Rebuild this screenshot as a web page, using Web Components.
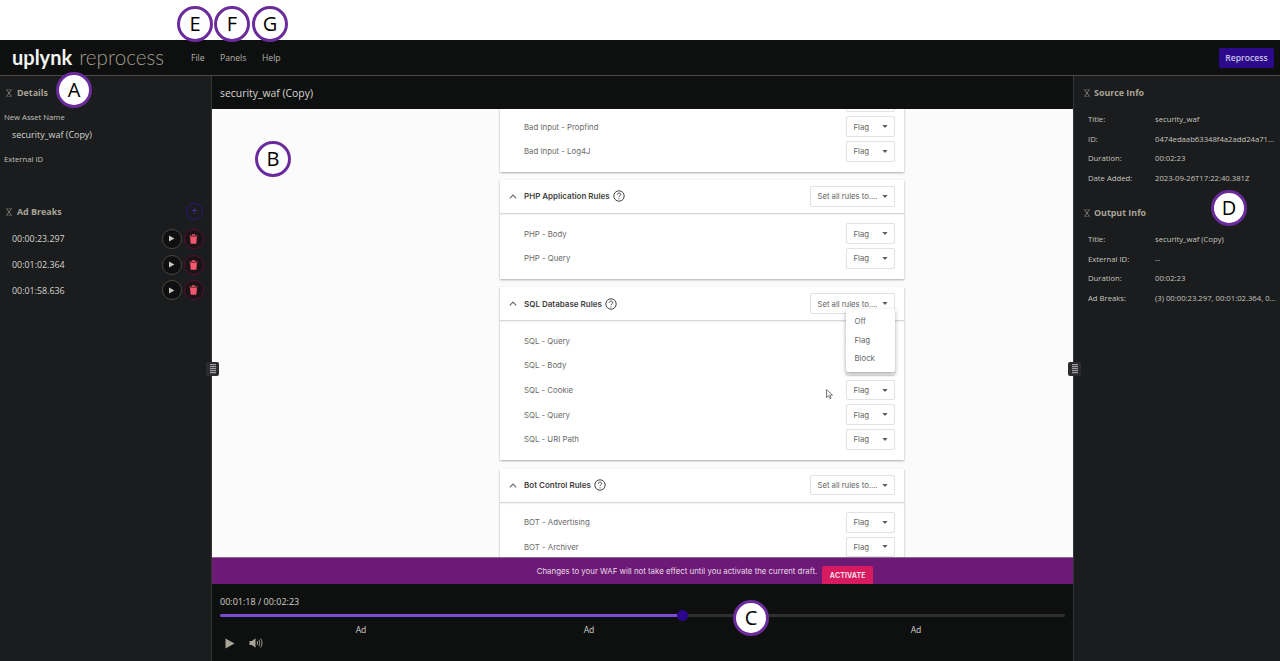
<!DOCTYPE html>
<html>
<head>
<meta charset="utf-8">
<title>uplynk reprocess</title>
<style>
    html, body { margin: 0; height: 661px; overflow: hidden; background: #fff; }
    body { font-family: "Open Sans", "Liberation Sans", sans-serif; }
</style>
</head>
<body>
<reprocess-app></reprocess-app>

<script>
const ICONS = {
    collapse: '<svg width="8" height="8" viewBox="0 0 8 8" fill="none" stroke="#8a8880" stroke-width=".85"><path d="M1.6.7 6.4 7.3M6.4.7 1.6 7.3"/><path d="M1.2.5h5.6M1.2 7.5h5.6" stroke-opacity=".45"/></svg>',
    play: '<svg width="7" height="7" viewBox="0 0 7 7"><path d="M1 .6 6.4 3.5 1 6.4z" fill="#c9c6bc"/></svg>',
    trash: '<svg width="9" height="10" viewBox="0 0 9 10"><path d="M.5 1.5h8v1H.5zM3 .3h3v1H3zM1.1 3h6.8l-.5 6.3c0 .3-.3.5-.6.5H2.2c-.3 0-.6-.2-.6-.5z" fill="#f5566f"/></svg>',
    caret: '<svg width="6" height="3" viewBox="0 0 6 3"><path d="M.4 0h5.2L3 3z" fill="#5c5c5c"/></svg>',
    chevron: '<svg width="8" height="5" viewBox="0 0 8 5" fill="none" stroke="#666" stroke-width="1.1"><path d="M.8 4.3 4 1.1l3.2 3.2"/></svg>',
    help: '<svg width="12" height="12" viewBox="0 0 12 12" fill="none" stroke="#444" stroke-width="1"><circle cx="6" cy="6" r="5.2"/><path d="M4.3 4.7c0-1 .8-1.6 1.7-1.6s1.7.6 1.7 1.5c0 1.2-1.7 1.3-1.7 2.6" /><path d="M6 8.3v1" /></svg>'
};

class ReprocessApp extends HTMLElement {
    constructor() {
        super();
        this.attachShadow({ mode: 'open' });
    }

    connectedCallback() {
        this.shadowRoot.innerHTML = `
            <style>
                :host { display: flex; flex-direction: column; height: 661px; position: relative; overflow: hidden; }
                .strip { height: 40px; flex: none; background: #fff; }
                .main { flex: 1; display: flex; min-height: 0; }
                .centre { flex: 1; min-width: 0; display: flex; flex-direction: column; }
                side-panel:first-child { width: 212px; }
                side-panel:last-child { width: 207px; }
            </style>
            <div class="strip"></div>
            <top-bar></top-bar>
            <div class="main">
                <side-panel>
                    <details-pane></details-pane>
                    <ad-breaks></ad-breaks>
                </side-panel>
                <div class="centre">
                    <title-bar>security_waf (Copy)</title-bar>
                    <waf-view></waf-view>
                    <draft-banner></draft-banner>
                    <player-bar></player-bar>
                </div>
                <side-panel edge>
                    <info-pane heading="Source Info" rows='[["Title:","security_waf"],["ID:","0474edaab63348f4a2add24a71..."],["Duration:","00:02:23"],["Date Added:","2023-09-26T17:22:40.381Z"]]'></info-pane>
                    <info-pane heading="Output Info" rows='[["Title:","security_waf (Copy)"],["External ID:","--"],["Duration:","00:02:23"],["Ad Breaks:","(3) 00:00:23.297, 00:01:02.364, 0..."]]'></info-pane>
                </side-panel>
            </div>
            <drag-grip style="left:206px"></drag-grip>
            <drag-grip style="left:1068px"></drag-grip>
            <call-out style="left:177px;top:6px">E</call-out>
            <call-out style="left:214px;top:6px">F</call-out>
            <call-out style="left:252px;top:6px">G</call-out>
            <call-out style="left:56px;top:72px">A</call-out>
            <call-out style="left:255px;top:141px">B</call-out>
            <call-out style="left:733px;top:600px">C</call-out>
            <call-out style="left:1211px;top:190px">D</call-out>
        `;
    }
}
customElements.define('reprocess-app', ReprocessApp);

class TopBar extends HTMLElement {
    constructor() {
        super();
        this.attachShadow({ mode: 'open' });
    }

    connectedCallback() {
        this.shadowRoot.innerHTML = `
            <style>
                :host { display: flex; align-items: center; flex: none; height: 35px; background: #0e1010; border-bottom: 1px solid #4b4a47; padding: 0 6px 0 12px; color: #b5b2a8; font-size: 8.6px; }
                .logo { width: 179px; display: flex; align-items: baseline; white-space: nowrap; line-height: 35px; }
                .brand { font: 700 20px/35px Lato, sans-serif; color: #f4f4f2; position: relative; }
                .brand svg { position: absolute; left: 14.5px; top: 14px; }
                .product { font: 300 20.6px/35px Lato, sans-serif; color: #a39d8c; margin-left: 7px; }
                nav { flex: 1; display: flex; }
                nav span:nth-child(1) { width: 29px; }
                nav span:nth-child(2) { width: 42px; }
                button { font: 600 8.6px "Open Sans", sans-serif; width: 55px; height: 20px; border: 0; border-radius: 2px; background: #2d0a8c; color: #c9c3e6; padding: 0; }
            </style>
            <div class="logo"><span class="brand">uplynk<svg width="5" height="6" viewBox="0 0 5 6"><path d="M.5.5 4.5 3 .5 5.5z" fill="#0e1010"/></svg></span><span class="product">reprocess</span></div>
            <nav><span>File</span><span>Panels</span><span>Help</span></nav>
            <button>Reprocess</button>
        `;
    }
}
customElements.define('top-bar', TopBar);

class SidePanel extends HTMLElement {
    constructor() {
        super();
        this.attachShadow({ mode: 'open' }).innerHTML = `
            <style>
                :host { display: block; flex: none; background: #1a1c1e; color: #d0cec6; font-size: 8.6px; box-sizing: border-box; border-right: 1px solid #34363a; }
                :host([edge]) { border-right: 0; border-left: 1px solid #34363a; padding-left: 8px; }
            </style>
            <slot></slot>
        `;
    }
}
customElements.define('side-panel', SidePanel);

class PanelHeading extends HTMLElement {
    constructor() {
        super();
        this.attachShadow({ mode: 'open' }).innerHTML = `
            <style>
                :host { display: flex; align-items: center; gap: 4px; font-weight: 700; font-size: 8.9px; color: #a9a598; height: 33px; padding-left: 5px; }
                svg { flex: none; }
            </style>
            ${ICONS.collapse}<slot></slot>
        `;
    }
}
customElements.define('panel-heading', PanelHeading);

class DetailsPane extends HTMLElement {
    constructor() {
        super();
        this.attachShadow({ mode: 'open' }).innerHTML = `
            <style>
                :host { display: block; height: 119px; }
                .label { padding-left: 4px; font-size: 7.7px; line-height: 12px; margin-top: 2px; color: #c4c2ba; }
                .value { padding-left: 12px; font-size: 8.95px; line-height: 14px; margin: 5px 0 11px; color: #d8d6cf; }
            </style>
            <panel-heading>Details</panel-heading>
            <div class="label">New Asset Name</div>
            <div class="value">security_waf (Copy)</div>
            <div class="label">External ID</div>
        `;
    }
}
customElements.define('details-pane', DetailsPane);

class AdBreaks extends HTMLElement {
    constructor() {
        super();
        this.attachShadow({ mode: 'open' }).innerHTML = `
            <style>
                :host { display: block; }
                .top { display: flex; justify-content: space-between; align-items: center; padding-right: 8px; height: 33px; }
                .add { width: 15px; height: 15px; border: 1px solid #2c1587; border-radius: 50%; color: #43309f; font-size: 12px; line-height: 14px; text-align: center; }
                .list { margin-top: -2px; }
            </style>
            <div class="top"><panel-heading>Ad Breaks</panel-heading><div class="add">+</div></div>
            <div class="list">
                <ad-break>00:00:23.297</ad-break>
                <ad-break>00:01:02.364</ad-break>
                <ad-break>00:01:58.636</ad-break>
            </div>
        `;
    }
}
customElements.define('ad-breaks', AdBreaks);

class AdBreak extends HTMLElement {
    constructor() {
        super();
        this.attachShadow({ mode: 'open' }).innerHTML = `
            <style>
                :host { display: flex; align-items: center; height: 25.7px; padding: 0 7.5px 0 12px; font-size: 8.9px; color: #d8d6cf; }
                .time { flex: 1; }
                .btn { box-sizing: border-box; width: 20px; height: 20px; border-radius: 50%; display: flex; align-items: center; justify-content: center; margin-left: 2px; }
                .play { border: 1px solid #4a4840; background: #0e0f10; }
                .del { border: 1px solid #5a0f2c; background: #1a1416; }
            </style>
            <span class="time"><slot></slot></span>
            <span class="btn play">${ICONS.play}</span>
            <span class="btn del">${ICONS.trash}</span>
        `;
    }
}
customElements.define('ad-break', AdBreak);

class InfoPane extends HTMLElement {
    constructor() {
        super();
        this.attachShadow({ mode: 'open' });
    }

    connectedCallback() {
        const rows = JSON.parse(this.getAttribute('rows') || '[]');
        const rowsHtml = rows.map(r => `<div class="row"><span class="k">${r[0]}</span><span class="v">${r[1]}</span></div>`).join('');
        this.shadowRoot.innerHTML = `
            <style>
                :host { display: block; height: 120px; }
                panel-heading { margin-left: -4px; gap: 3px; }
                .rows { margin-top: .5px; }
                .row { display: flex; height: 19.6px; align-items: center; padding-left: 6px; font-size: 7.7px; white-space: nowrap; color: #c8c6be; }
                .k { width: 67px; flex: none; }
            </style>
            <panel-heading>${this.getAttribute('heading')}</panel-heading>
            <div class="rows">${rowsHtml}</div>
        `;
    }
}
customElements.define('info-pane', InfoPane);

class TitleBar extends HTMLElement {
    constructor() {
        super();
        this.attachShadow({ mode: 'open' }).innerHTML = `
            <style>
                :host { display: flex; flex: none; align-items: center; height: 33px; padding-left: 8px; background: #0e1010; color: #d8d6cf; font-size: 10.4px; }
            </style>
            <slot></slot>
        `;
    }
}
customElements.define('title-bar', TitleBar);

class WafView extends HTMLElement {
    constructor() {
        super();
        this.attachShadow({ mode: 'open' }).innerHTML = `
            <style>
                :host { display: block; flex: 1; min-height: 0; overflow: hidden; background: #fbfbfb; font-family: Inter, sans-serif; position: relative; }
                .scrolled { display: flex; flex-direction: column; gap: 8.4px; margin: -26.7px 0 0 288px; }
                waf-card:last-child { margin-top: .6px; }
            </style>
            <div class="scrolled">
                <waf-card rules="*|Bad Input - Propfind|Bad Input - Log4J"></waf-card>
                <waf-card heading="PHP Application Rules" rules="PHP - Body|PHP - Query"></waf-card>
                <waf-card heading="SQL Database Rules" rules="*SQL - Query|*SQL - Body|SQL - Cookie|SQL - Query|SQL - URI Path" open></waf-card>
                <waf-card heading="Bot Control Rules" rules="BOT - Advertising|BOT - Archiver"></waf-card>
            </div>
            <mouse-cursor></mouse-cursor>
        `;
    }
}
customElements.define('waf-view', WafView);

class WafSelect extends HTMLElement {
    constructor() {
        super();
        this.attachShadow({ mode: 'open' }).innerHTML = `
            <style>
                :host { display: flex; align-items: center; justify-content: space-between; box-sizing: border-box; height: 20.6px; padding: 0 6.5px; background: #fff; border: 1px solid #e2e2e2; border-radius: 2px; box-shadow: 0 0 1px #0001; color: #666; font-size: 7.8px; white-space: nowrap; }
            </style>
            <span><slot></slot></span>${ICONS.caret}
        `;
    }
}
customElements.define('waf-select', WafSelect);

class WafCard extends HTMLElement {
    constructor() {
        super();
        this.attachShadow({ mode: 'open' });
    }

    connectedCallback() {
        // a leading * marks a row whose select sits under the menu or the scroll edge
        const rules = (this.getAttribute('rules') || '').split('|');
        const rulesHtml = rules.map(r => {
            const covered = r.startsWith('*');
            return `<div class="rule"><span>${covered ? r.slice(1) : r}</span><waf-select class="flag">${covered ? '' : 'Flag'}</waf-select></div>`;
        }).join('');
        const heading = this.getAttribute('heading');
        const headHtml = heading ? `
            <div class="head">
                <span class="chev">${ICONS.chevron}</span>
                <b>${heading}</b>${ICONS.help}
                <waf-select class="all">Set all rules to....</waf-select>
                ${this.hasAttribute('open') ? '<div class="menu"><div>Off</div><div>Flag</div><div>Block</div></div>' : ''}
            </div>` : '';
        this.shadowRoot.innerHTML = `
            <style>
                :host { display: block; width: 404px; background: #fff; box-shadow: 0 1px 2px rgba(0,0,0,.32); font-size: 7.8px; color: #6a6a6a; flex: none; }
                .head { display: flex; align-items: center; height: 33px; border-bottom: 1px solid #d9d9d9; padding-left: 9px; position: relative; box-shadow: 0 1px 1px #0000000d; }
                .chev { width: 15px; display: flex; }
                b { font-weight: 600; font-size: 8px; color: #3f3f3f; margin-right: 3px; }
                .all { width: 85px; margin-left: auto; margin-right: 9px; letter-spacing: -.05px; }
                .body { padding: 7.5px 9px 8px 24px; }
                .rule { display: flex; justify-content: space-between; align-items: center; height: 24.6px; }
                .flag { width: 49px; }
                .menu { position: absolute; z-index: 2; right: 9px; top: 21.5px; width: 49px; height: 63px; box-sizing: border-box; padding: 3.5px 0 0 8.5px; background: #fff; border-radius: 2px; box-shadow: 0 2px 4px rgba(0,0,0,.35); color: #666; }
                .menu div { height: 18.7px; line-height: 18.7px; }
            </style>
            ${headHtml}
            <div class="body">${rulesHtml}</div>
        `;
    }
}
customElements.define('waf-card', WafCard);

class MouseCursor extends HTMLElement {
    constructor() {
        super();
        this.attachShadow({ mode: 'open' }).innerHTML = `
            <style>
                :host { position: absolute; left: 614px; top: 280px; width: 8px; height: 11px; }
                svg { display: block; }
            </style>
            <svg width="8" height="11" viewBox="0 0 8 11"><path d="M.5.5v8l2-1.8 1.3 3 1.3-.6-1.3-2.9h2.7z" fill="#fff" stroke="#555" stroke-width=".8"/></svg>
        `;
    }
}
customElements.define('mouse-cursor', MouseCursor);

class DraftBanner extends HTMLElement {
    constructor() {
        super();
        this.attachShadow({ mode: 'open' }).innerHTML = `
            <style>
                :host { display: flex; flex: none; justify-content: center; align-items: flex-end; gap: 5px; height: 27px; background: #6c1a75; color: #e9dcea; font: 7.85px Inter, sans-serif; box-sizing: border-box; border-top: 1px solid #8a6a90; padding-left: 125px; }
                span { align-self: center; }
                button { width: 51px; height: 18px; padding: 0; border: 0; border-radius: 2px 2px 0 0; background: #d81b60; color: #f6dbe6; font: 700 7px Inter, sans-serif; letter-spacing: .1px; }
            </style>
            <span>Changes to your WAF will not take effect until you activate the current draft.</span>
            <button>ACTIVATE</button>
        `;
    }
}
customElements.define('draft-banner', DraftBanner);

class PlayerBar extends HTMLElement {
    constructor() {
        super();
        this.attachShadow({ mode: 'open' }).innerHTML = `
            <style>
                :host { display: block; flex: none; height: 77px; box-sizing: border-box; padding: 12px 8px 0; background: #0e1010; color: #d2d0c8; font-size: 8.6px; position: relative; }
                .time { line-height: 12px; font-size: 9px; }
                .track { height: 3px; border-radius: 2px; background: #2f2f2f; margin-top: 6px; position: relative; }
                .fill { width: 462px; height: 3px; border-radius: 2px; background: #7c4bd3; }
                .thumb { position: absolute; left: 456.5px; top: -4px; width: 11px; height: 11px; border-radius: 50%; background: #2b068c; }
                .marks { height: 12px; margin-top: 7px; line-height: 12px; position: relative; }
                .marks span { position: absolute; transform: translateX(-50%); }
                .controls { display: flex; align-items: center; gap: 14px; margin-top: -1px; padding-left: 5px; height: 16px; }
            </style>
            <div class="time">00:01:18 / 00:02:23</div>
            <div class="track"><div class="fill"></div><div class="thumb"></div></div>
            <div class="marks"><span style="left:141px">Ad</span><span style="left:369px">Ad</span><span style="left:696px">Ad</span></div>
            <div class="controls">
                <svg width="10" height="11" viewBox="0 0 10 11"><path d="M.5.5 9.5 5.5.5 10.5z" fill="#a8a598"/></svg>
                <svg width="14" height="12" viewBox="0 0 14 12" fill="none" stroke="#a8a598"><path d="M.5 4h2.5L6.5 1.2v9.6L3 8H.5z" fill="#a8a598" stroke="none"/><path d="M8 4c.7.9.7 3.1 0 4M9.8 2.8c1.2 1.7 1.2 4.7 0 6.4M11.6 1.5c1.9 2.5 1.9 6.5 0 9" stroke-width=".9"/></svg>
            </div>
        `;
    }
}
customElements.define('player-bar', PlayerBar);

class DragGrip extends HTMLElement {
    constructor() {
        super();
        this.attachShadow({ mode: 'open' }).innerHTML = `
            <style>
                :host { position: absolute; top: 362px; width: 13px; height: 14px; box-sizing: border-box; padding: 2px 3.5px; background: #2a2c2e; border-radius: 2px; z-index: 3; }
                div { height: 100%; background: repeating-linear-gradient(#9a9a9a 0 1px, #44464a 1px 2px); }
            </style>
            <div></div>
        `;
    }
}
customElements.define('drag-grip', DragGrip);

class CallOut extends HTMLElement {
    constructor() {
        super();
        this.attachShadow({ mode: 'open' }).innerHTML = `
            <style>
                :host { position: absolute; width: 36px; height: 36px; box-sizing: border-box; border: 3px solid #6a2c9c; border-radius: 50%; background: #fff; color: #000; font: 20px/30px "Open Sans", sans-serif; text-align: center; z-index: 5; }
            </style>
            <slot></slot>
        `;
    }
}
customElements.define('call-out', CallOut);
</script>
</body>
</html>
